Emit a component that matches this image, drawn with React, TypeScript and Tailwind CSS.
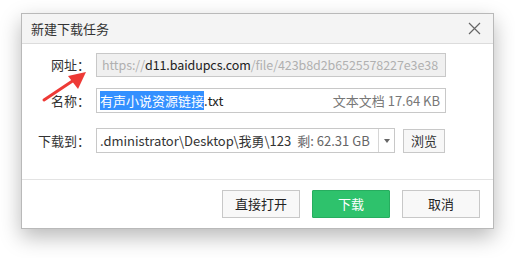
import React from "react";

const font = { fontFamily: '"Noto Sans CJK SC", "Noto Sans", sans-serif' };

export default function App() {
  return (
    <div className="w-[515px] h-[258px] bg-white relative overflow-hidden" style={font}>
      <div className="pt-[13px] pl-[21px]">
        <div className="w-[473px] h-[216px] border border-[#b9b9b9] bg-white shadow-[0_8px_20px_rgba(0,0,0,0.28)] flex flex-col">
          {/* Title bar */}
          <div className="h-[30px] bg-[#f4f4f4] border-b border-[#dcdcdc] flex items-center justify-between pl-[9px] pr-[12px]">
            <span className="text-[13px] text-[#333] leading-none">新建下载任务</span>
            <svg width="13" height="13" viewBox="0 0 13 13">
              <path d="M1 1 L12 12 M12 1 L1 12" stroke="#666" strokeWidth="1.2" />
            </svg>
          </div>
          {/* Body */}
          <div className="flex-1 pt-[9px]">
            <div className="flex items-center h-[24px]">
              <div className="w-[68px] text-right text-[13px] text-[#333]">网址：</div>
              <div className="ml-[6px] w-[350px] h-[24px] border border-[#c8c8c8] bg-[#f0f0f0] flex items-center pl-[5px] text-[12.5px] tracking-[-0.08px] whitespace-nowrap overflow-hidden">
                <span className="text-[#b0b0b0]">https://</span>
                <span className="text-[#222]">d11.baidupcs.com</span>
                <span className="text-[#b0b0b0]">/file/423b8d2b6525578227e3e38</span>
              </div>
            </div>
            <div className="flex items-center h-[25px] mt-[11px]">
              <div className="w-[68px] text-right text-[13px] text-[#333]">名称：</div>
              <div className="ml-[6px] w-[350px] h-[25px] border border-[#c8c8c8] bg-white flex items-center justify-between pl-[3px] pr-[5px] text-[13px] whitespace-nowrap">
                <span>
                  <span className="bg-[#3390ff] text-white">有声小说资源链接</span>
                  <span className="text-[#222]">.txt</span>
                </span>
                <span className="text-[#777]">文本文档 17.64 KB</span>
              </div>
            </div>
            <div className="flex items-center h-[25px] mt-[15px]">
              <div className="w-[68px] text-right text-[13px] text-[#333]">下载到：</div>
              <div className="ml-[6px] w-[299px] h-[25px] border border-[#c8c8c8] bg-white flex items-stretch text-[13px] whitespace-nowrap">
                <div className="flex-1 flex items-center pl-[3px] overflow-hidden">
                  <span className="text-[#333]">.dministrator\Desktop\我勇\123</span>
                  <span className="text-[#666] ml-[6px]">剩: 62.31 GB</span>
                </div>
                <div className="w-[16px] border-l border-[#d6d6d6] flex items-center justify-center">
                  <svg width="6" height="4" viewBox="0 0 6 4">
                    <path d="M0 0 L6 0 L3 4 Z" fill="#666" />
                  </svg>
                </div>
              </div>
              <button className="ml-[8px] w-[42px] h-[24px] border border-[#c8c8c8] bg-[#f7f7f7] text-[13px] text-[#333] flex items-center justify-center">
                浏览
              </button>
            </div>
          </div>
          {/* Footer */}
          <div className="h-[49px] border-t border-[#e3e3e3] flex items-start justify-end pt-[10px] pr-[13px] gap-[12px]">
            <button className="w-[78px] h-[28px] border border-[#c8c8c8] bg-[#f8f8f8] text-[13px] text-[#222] flex items-center justify-center">
              直接打开
            </button>
            <button className="w-[78px] h-[28px] border border-[#27ad5f] bg-[#2ec26c] text-[13px] text-white flex items-center justify-center rounded-[1px]">
              下载
            </button>
            <button className="w-[78px] h-[28px] border border-[#c8c8c8] bg-[#f8f8f8] text-[13px] text-[#222] flex items-center justify-center">
              取消
            </button>
          </div>
        </div>
      </div>
      {/* Red annotation arrow */}
      <svg className="absolute left-0 top-0" width="515" height="258" viewBox="0 0 515 258">
        <path d="M44 100 L74 80" stroke="#ee3a36" strokeWidth="3" strokeLinecap="round" />
        <path d="M86 72 L68 76 L78 89 Z" fill="#ee3a36" />
      </svg>
    </div>
  );
}
